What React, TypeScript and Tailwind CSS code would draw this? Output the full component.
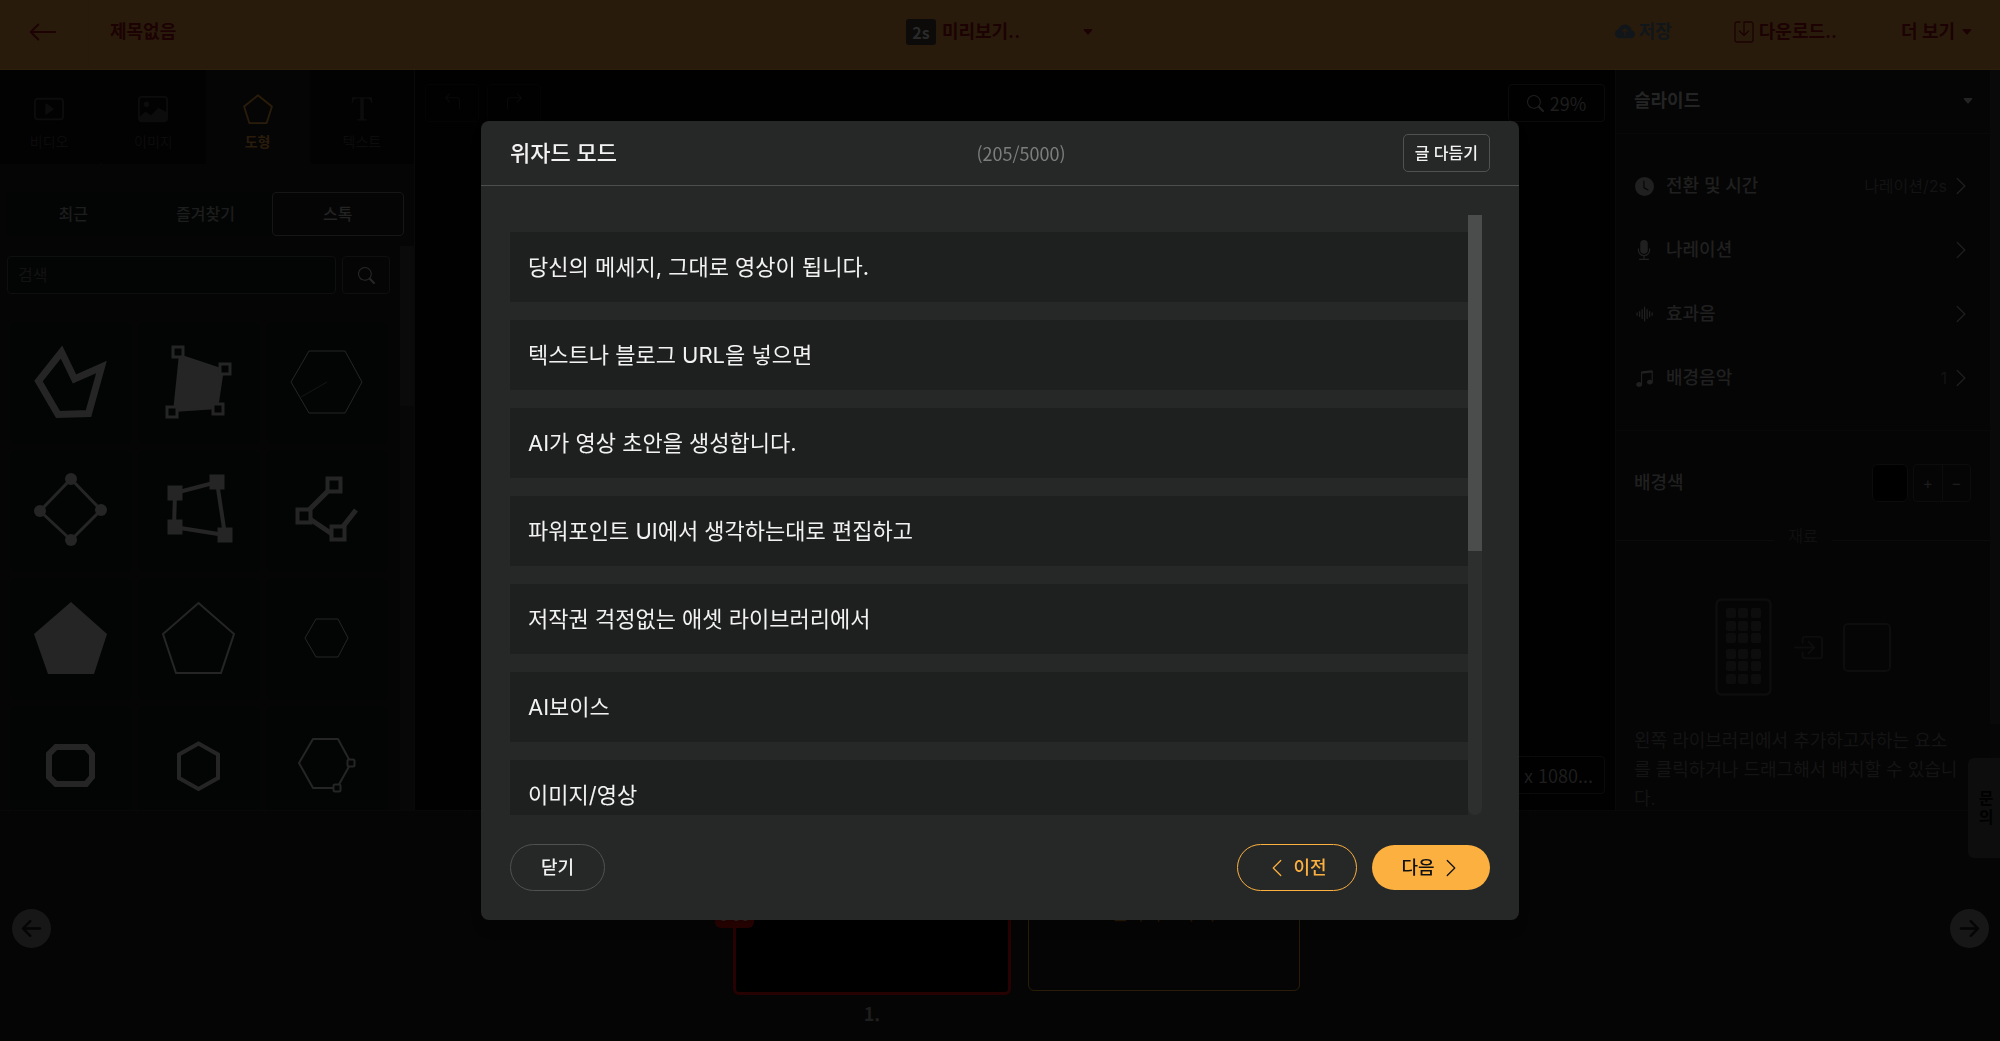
import React from "react";
import {
  BsArrow90DegLeft,
  BsArrow90DegRight,
  BsArrowLeft,
  BsArrowLeftCircleFill,
  BsArrowRightCircleFill,
  BsBoxArrowInRight,
  BsCaretDownFill,
  BsChevronLeft,
  BsChevronRight,
  BsClockFill,
  BsCloudArrowUpFill,
  BsFonts,
  BsImage,
  BsMicFill,
  BsMusicNoteBeamed,
  BsPentagon,
  BsPlayBtn,
  BsSearch,
  BsSoundwave,
} from "react-icons/bs";

const scriptLines = [
  "당신의 메세지, 그대로 영상이 됩니다.",
  "텍스트나 블로그 URL을 넣으면",
  "AI가 영상 초안을 생성합니다.",
  "파워포인트 UI에서 생각하는대로 편집하고",
  "저작권 걱정없는 애셋 라이브러리에서",
  "AI보이스",
  "이미지/영상",
];

function DownloadIcon() {
  return (
    <svg width="20" height="22" viewBox="0 0 20 22" fill="none" stroke="currentColor" strokeWidth="1.3" strokeLinecap="round" strokeLinejoin="round">
      <path d="M6 1H3a2 2 0 0 0-2 2v16a2 2 0 0 0 2 2h14a2 2 0 0 0 2-2V3a2 2 0 0 0-2-2h-7v13M5.500 10l4.500 4.500 4.500-4.500" />
    </svg>
  );
}

function Header() {
  return (
    <header className="flex h-[70px] shrink-0 items-center border-b border-[#2d1f0e] bg-[#281b0c] text-lg font-bold text-[#1c0203]">
      <div className="flex h-full flex-1 items-center">
        <button aria-label="뒤로" className="flex h-full w-[90px] items-center border-r border-[#241a0d] pb-[6px] pl-[28px]">
          <BsArrowLeft size={30} />
        </button>
        <button className="px-5 pb-[6px]">제목없음</button>
      </div>
      <div className="flex items-center pb-[6px]">
        <button className="flex items-center gap-[6px]">
          <span className="flex h-[26px] w-[30px] items-center justify-center rounded-[3px] bg-[#0c0b09] font-['Noto_Sans_CJK_KR',sans-serif] text-base text-[#2a2a2a]">2s</span>
          <span>미리보기..</span>
        </button>
        <button aria-label="미리보기 옵션" className="ml-[62px]">
          <BsCaretDownFill size={12} />
        </button>
      </div>
      <div className="flex flex-1 items-center justify-end pb-[6px]">
        <button className="flex items-center gap-1 text-[#101619]">
          <BsCloudArrowUpFill size={20} />
          저장
        </button>
        <button className="ml-[62px] flex items-center gap-[5px]">
          <DownloadIcon />
          다운로드..
        </button>
        <button className="mr-[27px] ml-[64px] flex items-center gap-[6px]">
          더 보기
          <BsCaretDownFill size={12} />
        </button>
      </div>
    </header>
  );
}

const tabs = [
  { label: "비디오", icon: <BsPlayBtn size={30} />, active: false },
  { label: "이미지", icon: <BsImage size={30} />, active: false },
  { label: "도형", icon: <BsPentagon size={30} />, active: true },
  { label: "텍스트", icon: <BsFonts size={38} />, active: false },
];

const squares = (points: number[][], size: number, fill: string, width: number, rx = 0) =>
  points.map(([x, y]) => (
    <rect key={`${x}-${y}`} x={x - size / 2} y={y - size / 2} width={size} height={size} rx={rx} fill={fill} strokeWidth={width} />
  ));

const shapes: { name: string; art: React.ReactNode }[] = [
  {
    name: "다각형",
    art: <polygon points="51.5,30 64.5,57 91.5,45 78.5,91.5 48,92.5 28.5,59" strokeWidth="7" strokeMiterlimit="10" />,
  },
  {
    name: "점 다각형",
    art: (
      <>
        <polygon points="41,32 86,47 80,87 35,90" fill="currentColor" stroke="none" />
        {squares([[40, 30], [87, 47], [80, 87], [34, 90]], 10, "#030504", 3)}
      </>
    ),
  },
  {
    name: "육각형 반지름",
    art: (
      <>
        <polygon points="43,29 79,29 96,60 79,91 43,91 25,60" strokeWidth="1" />
        <path d="M61 60 35 75" strokeWidth="1" opacity="0.5" />
      </>
    ),
  },
  {
    name: "마름모",
    art: (
      <>
        <polygon points="61,29 91,60 61,90 30,61" strokeWidth="3" />
        <g fill="currentColor" stroke="none">
          <circle cx="61" cy="29" r="6" />
          <circle cx="91" cy="60" r="6" />
          <circle cx="61" cy="90" r="6" />
          <circle cx="30" cy="61" r="6" />
        </g>
      </>
    ),
  },
  {
    name: "사각형",
    art: (
      <>
        <polygon points="37,43 79,32 87,85 36,77" strokeWidth="4" />
        {squares([[37, 43], [79, 32], [87, 85], [37, 77]], 15, "currentColor", 0)}
      </>
    ),
  },
  {
    name: "꺾은선",
    art: (
      <>
        <path d="M68 35 38 65 69 86M72 83 90 60" strokeWidth="5" />
        {squares([[68, 35], [38, 66], [72, 83]], 13, "#030504", 4)}
      </>
    ),
  },
  { name: "오각형", art: <polygon points="61,24 97,56 84,96 38,96 24,56" fill="currentColor" stroke="none" /> },
  { name: "오각형 윤곽", art: <polygon points="60.5,25 96,56 83,95 38,95 25,56" strokeWidth="2" /> },
  { name: "육각형", art: <polygon points="50,41 72,41 82,60 72,79 50,79 39,60" strokeWidth="1" /> },
  { name: "팔각형", art: <polygon points="46,41 76,41 82,48 82,71 76,78 46,78 39,71 39,48" strokeWidth="6" /> },
  { name: "세로 육각형", art: <polygon points="60.5,37.5 80,48.5 80,72 60.5,83 41,72 41,48.5" strokeWidth="4" /> },
  {
    name: "점 육각형",
    art: (
      <>
        <polygon points="47,33 72,33 85,57 71,82 47,82 33,57" strokeWidth="2" strokeLinejoin="round" />
        {squares([[85, 57], [71, 82]], 7, "#030504", 2, 1.5)}
      </>
    ),
  },
];

function Library() {
  return (
    <aside className="flex w-[415px] shrink-0 flex-col overflow-hidden border-r border-[#090909] bg-[#050505]">
      <div className="-ml-[3px] grid h-[94px] shrink-0 grid-cols-4 text-sm text-[#0c0c0c]">
        {tabs.map((t) => (
          <button
            key={t.label}
            className={
              t.active
                ? "flex flex-col items-center gap-2 bg-[#050505] pt-6 font-bold text-[#2a1c0b]"
                : "flex flex-col items-center gap-2 rounded-b-sm bg-[#020202] pt-6"
            }
          >
            <span className="flex h-[30px] items-center">{t.icon}</span>
            {t.label}
          </button>
        ))}
      </div>
      <div className="mx-[7px] mt-7 grid h-11 w-[397px] shrink-0 grid-cols-3 bg-[#030504] text-base font-medium text-[#1d1d1d]">
        <button>최근</button>
        <button>즐겨찾기</button>
        <button className="rounded-[4px] border border-[#161616] bg-[#050505] text-[#232323]">스톡</button>
      </div>
      <div className="mt-[10px] flex min-h-0 flex-1 overflow-hidden">
        <div className="flex-1 pt-[10px] pl-[7px]">
          <form className="flex gap-[6px]">
            <input
              aria-label="검색"
              placeholder="검색"
              className="h-[38px] w-[329px] rounded-[4px] border border-[#0f0f0f] bg-[#030504] px-[10px] text-base placeholder:text-[#121212]"
            />
            <button type="button" aria-label="검색" className="flex h-[38px] w-12 items-center justify-center rounded-[4px] border border-[#0f0f0f] text-[#272727]">
              <BsSearch size={17} />
            </button>
          </form>
          <div className="mt-7 ml-[3px] grid grid-cols-[repeat(3,122px)] gap-[6px]">
            {shapes.map((s) => (
              <button key={s.name} aria-label={s.name} className="h-[122px] rounded-md bg-[#030504] text-[#252525]">
                <svg width="122" height="122" viewBox="0 0 122 122" fill="none" stroke="currentColor">
                  {s.art}
                </svg>
              </button>
            ))}
          </div>
        </div>
        <div className="w-[14px] bg-[#070707]">
          <div className="h-[160px] bg-[#0a0a0a]" />
        </div>
      </div>
    </aside>
  );
}

function Canvas() {
  return (
    <main className="flex min-w-0 flex-1 flex-col justify-between bg-[#010101] px-[10px] pt-[14px] pb-4 font-['Noto_Sans_CJK_KR',sans-serif]">
      <div className="flex items-center justify-between">
        <div className="flex gap-2 text-[#0a0a0a]">
          <button aria-label="실행 취소" className="flex h-[38px] w-[54px] items-center justify-center rounded-[4px] border border-[#040404] pb-1">
            <BsArrow90DegLeft size={17} />
          </button>
          <button aria-label="다시 실행" className="flex h-[38px] w-[54px] items-center justify-center rounded-[4px] border border-[#040404] pb-1">
            <BsArrow90DegRight size={17} />
          </button>
        </div>
        <button className="flex h-[38px] w-[97px] items-center justify-center gap-[6px] rounded-[4px] border border-[#0b0b0b] text-lg leading-6 text-[#1e1e1e]">
          <BsSearch size={17} />
          29%
        </button>
      </div>
      <button className="h-[38px] self-end rounded-[4px] border border-[#0b0b0b] px-[11px] text-lg leading-6 text-[#1e1e1e]">1920 x 1080...</button>
    </main>
  );
}

const settings = [
  { label: "전환 및 시간", value: "나레이션/2s", icon: <BsClockFill size={19} /> },
  { label: "나레이션", value: "", icon: <BsMicFill size={20} /> },
  { label: "효과음", value: "", icon: <BsSoundwave size={20} /> },
  { label: "배경음악", value: "1", icon: <BsMusicNoteBeamed size={19} /> },
];

function Inspector() {
  return (
    <aside className="flex w-[385px] shrink-0 overflow-hidden border-l border-[#090909] bg-[#050505] text-lg text-[#202020]">
      <div className="min-w-0 flex-1">
        <button className="flex h-16 w-full items-center justify-between border-b border-[#080808] pr-4 pb-[2px] pl-[18px] font-bold text-[#242424]">
          슬라이드
          <BsCaretDownFill size={12} />
        </button>
        <div className="h-[297px] border-b border-[#080808] pt-5">
          {settings.map((s) => (
            <button key={s.label} className="flex h-16 w-full items-center pr-[19px] pl-[18px] font-medium">
              <span className="flex w-5 justify-center">{s.icon}</span>
              <span className="ml-3">{s.label}</span>
              <span className="mr-[4px] ml-auto text-base font-normal text-[#131313]">{s.value}</span>
              <BsChevronRight size={20} />
            </button>
          ))}
        </div>
        <div className="flex h-[103px] items-center pr-[19px] pl-[18px] font-medium">
          <span className="flex-1">배경색</span>
          <button aria-label="배경색 선택" className="mr-[5px] h-[38px] w-9 rounded-md border border-[#0c0c0c] bg-black" />
          <div className="flex h-[38px] w-[58px] rounded-[4px] border border-[#0c0c0c] text-base font-normal text-[#1c1c1c]">
            <button className="flex-1 border-r border-[#0c0c0c]">+</button>
            <button className="flex-1">−</button>
          </div>
        </div>
        <div className="flex items-center gap-[14px] text-base text-[#101010]">
          <span className="h-px flex-1 bg-[#0b0b0b]" />
          <span className="-mt-2 leading-5">재료</span>
          <span className="h-px flex-1 bg-[#0b0b0b]" />
        </div>
        <div className="mt-[52px] flex items-center justify-center gap-5 text-[#0d0d0d]">
          <svg width="57" height="98" viewBox="0 0 57 98" fill="none">
            <rect x="1.5" y="1.5" width="54" height="95" rx="5" stroke="currentColor" strokeWidth="2.500" />
            {[10, 23, 35, 51, 63, 76].map((y) =>
              [11, 23, 36].map((x) => <rect key={`${x}-${y}`} x={x} y={y} width="10" height="10" rx="2" fill="currentColor" />),
            )}
          </svg>
          <BsBoxArrowInRight size={31} />
          <span className="h-[49px] w-12 rounded-[5px] border-2 border-current" />
        </div>
        <p className="mt-[30px] w-[344px] pl-[18px] leading-[29px] break-all text-[#141414]">
          왼쪽 라이브러리에서 추가하고자하는 요소를 클릭하거나 드래그해서 배치할 수 있습니다.
        </p>
      </div>
      <div className="w-[10px] bg-[#060606]">
        <div className="h-[654px] bg-[#090909]" />
      </div>
    </aside>
  );
}

function SlideStrip() {
  return (
    <section aria-label="슬라이드 목록" className="flex h-[231px] shrink-0 items-center justify-between border-t border-[#080808] bg-[#050505] pr-[11px] pl-3">
      <button aria-label="이전 슬라이드" className="pt-1 text-[#171717]">
        <BsArrowLeftCircleFill size={39} />
      </button>
      <div className="flex h-full gap-[17px] pt-6 pl-8">
        <div>
          <button aria-label="슬라이드 1" className="relative block h-[160px] w-[278px] rounded-md border-[3px] border-[#260302] bg-black">
            <span className="absolute top-[65px] -left-[21px] w-[39px] rounded-md bg-[#260302] text-center text-sm leading-[25px] text-[#2a2220]">0:00</span>
          </button>
          <p className="mt-1 text-center font-['Noto_Sans_CJK_KR',sans-serif] text-lg leading-7 font-bold text-[#1e1e1e]">1.</p>
        </div>
        <button className="mt-[2px] h-[154px] w-[272px] rounded-md border border-[#2b1c09] text-lg text-[#261808]">슬라이드 추가</button>
      </div>
      <button aria-label="다음 슬라이드" className="pt-1 text-[#171717]">
        <BsArrowRightCircleFill size={39} />
      </button>
    </section>
  );
}

function WizardDialog() {
  return (
    <div className="fixed inset-0 flex items-center justify-center">
      <section role="dialog" aria-modal="true" aria-labelledby="wizard-title" className="w-[1038px] max-w-full rounded-lg bg-[#262827] text-[#f2f2f2] shadow-lg">
        <header className="flex h-[65px] items-center border-b border-[#4b4e4d] px-[29px]">
          <h1 id="wizard-title" className="flex-1 text-[22px] font-medium">위자드 모드</h1>
          <span className="pl-[42px] font-['Noto_Sans_CJK_KR',sans-serif] text-lg leading-6 text-[#7c7d7d]">(205/5000)</span>
          <div className="flex flex-1 justify-end">
            <button className="h-[38px] rounded-[5px] border border-[#505251] px-[11px] text-base font-medium">글 다듬기</button>
          </div>
        </header>
        <div className="mx-[29px] mt-[29px] flex h-[600px] overflow-hidden pr-2">
          <ul className="flex flex-1 flex-col gap-[18px] pt-[17px]">
            {scriptLines.map((line) => (
              <li key={line} className="flex h-[70px] shrink-0 items-center bg-[#1e201f] px-[18px] text-[22px]">
                {line}
              </li>
            ))}
          </ul>
          <div className="w-[14px] rounded-b-full bg-[#2d2f2e]">
            <div className="h-[336px] bg-[#4b4d4c]" />
          </div>
        </div>
        <footer className="flex items-center px-[29px] py-[29px] text-lg">
          <button className="h-[47px] w-[95px] rounded-full border border-[#505251] font-medium">닫기</button>
          <button className="ml-auto flex h-[47px] w-[120px] items-center justify-center gap-[6px] rounded-full border border-[#fcb040] font-medium text-[#fcb040]">
            <BsChevronLeft size={20} />
            이전
          </button>
          <button className="ml-[15px] flex h-[45px] w-[118px] items-center justify-center gap-[6px] rounded-full bg-[#fcb040] font-medium text-[#111]">
            다음
            <BsChevronRight size={20} />
          </button>
        </footer>
      </section>
    </div>
  );
}

export default function App() {
  return (
    <div lang="ko" className="flex h-screen flex-col overflow-hidden bg-[#050505] font-['Inter','Noto_Sans_CJK_KR',sans-serif]">
      <Header />
      <div className="flex min-h-0 flex-1">
        <Library />
        <Canvas />
        <Inspector />
      </div>
      <SlideStrip />
      <button className="fixed right-0 bottom-[183px] flex h-[100px] w-8 items-center justify-center rounded-l-md bg-[#0d0d0d] pl-1 text-base leading-[19px] font-bold text-black">
        <span className="w-4 break-all">문의</span>
      </button>
      <WizardDialog />
    </div>
  );
}
